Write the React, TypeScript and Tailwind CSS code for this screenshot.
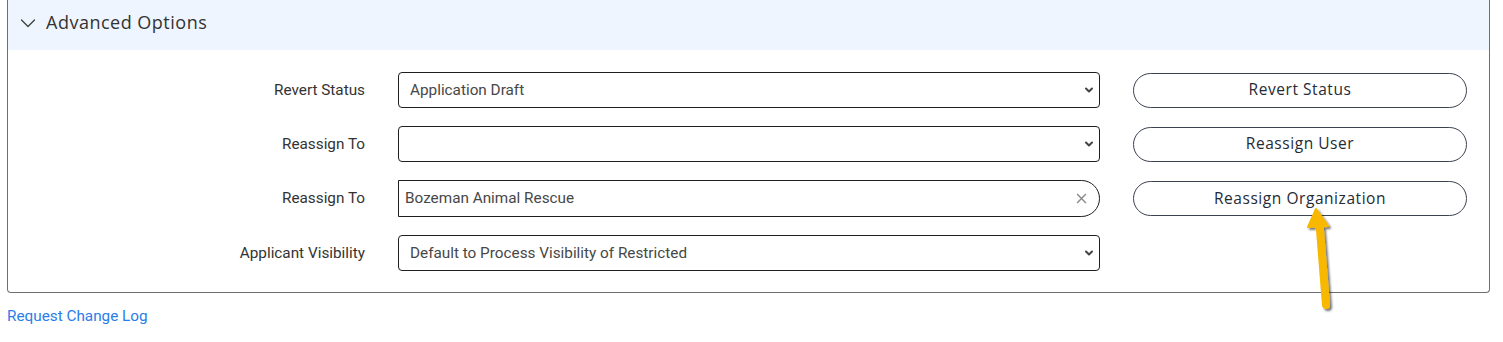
import React from 'react'

const labelFont = { fontFamily: 'Roboto, "Liberation Sans", sans-serif' }

const Chevron: React.FC = () => (
    <svg
        className="pointer-events-none absolute right-[6px] top-1/2 -translate-y-1/2 w-[10px] h-[10px] text-[#444]"
        viewBox="0 0 10 10"
        fill="none"
        stroke="currentColor"
        strokeWidth="2"
        strokeLinecap="round"
        strokeLinejoin="round"
    >
        <path d="M2 3.5l3 3 3-3" />
    </svg>
)

const SelectBox: React.FC<{ value: string }> = ({ value }) => (
    <div className="relative h-9">
        <div
            className="flex items-center h-full pl-[11px] pr-8 text-[15.3px] text-[#474747] bg-white border border-[#1f1f1f] rounded-[4px]"
            style={labelFont}
        >
            {value}
        </div>
        <Chevron />
    </div>
)

const PillButton: React.FC<{ children: React.ReactNode }> = ({ children }) => (
    <button
        type="button"
        className="w-full h-[35px] rounded-full border border-[#3b4250] bg-white text-[15.5px] text-[#252b36] font-['Open_Sans'] tracking-[0.55px]"
    >
        {children}
    </button>
)

const Row: React.FC<{ label: string; control: React.ReactNode; action?: string }> = ({
    label,
    control,
    action,
}) => (
    <div className="grid grid-cols-[357px_702px_334px] gap-x-[33px] items-center">
        <div className="text-right text-[15.3px] text-[#333]" style={labelFont}>
            {label}
        </div>
        <div>{control}</div>
        <div>{action && <PillButton>{action}</PillButton>}</div>
    </div>
)

const Arrow: React.FC = () => (
    <svg
        className="absolute left-[1295px] top-[200px] w-[45px] h-[120px] pointer-events-none"
        viewBox="1295 200 45 120"
    >
        <defs>
            <filter id="sh" x="-50%" y="-50%" width="200%" height="200%">
                <feDropShadow dx="2" dy="2" stdDeviation="1.2" floodColor="#000" floodOpacity="0.55" />
            </filter>
        </defs>
        <g filter="url(#sh)" fill="#f8b800" stroke="#f8b800">
            <line x1="1319.5" y1="224" x2="1326" y2="305" strokeWidth="8" strokeLinecap="round" />
            <polygon points="1316,209 1328,226 1308,227" strokeWidth="2" strokeLinejoin="round" />
        </g>
    </svg>
)

const App: React.FC = () => {
    return (
        <div className="relative w-[1503px] h-[342px] bg-white overflow-hidden">
            <div className="ml-[7px] w-[1483px] border border-t-0 border-[#6e6e6e] rounded-b-[4px]">
                <div className="flex items-center h-[50px] bg-[#eef5fe] pl-[12px] pb-[5px] gap-[10px]">
                    <svg
                        className="w-[16px] h-[16px] text-[#444]"
                        viewBox="0 0 16 16"
                        fill="none"
                        stroke="currentColor"
                        strokeWidth="1.4"
                        strokeLinecap="round"
                        strokeLinejoin="round"
                    >
                        <path d="M1.5 5l6.5 6.5L14.5 5" />
                    </svg>
                    <span className="text-[18px] text-[#333] font-['Open_Sans'] tracking-[0.5px]">
                        Advanced Options
                    </span>
                </div>
                <div className="flex flex-col gap-[18px] pt-[22px] pb-[21px]">
                    <Row
                        label="Revert Status"
                        control={<SelectBox value="Application Draft" />}
                        action="Revert Status"
                    />
                    <Row
                        label="Reassign To"
                        control={<SelectBox value="" />}
                        action="Reassign User"
                    />
                    <Row
                        label="Reassign To"
                        control={
                            <div className="flex items-center h-[37px] pl-[6px] pr-[12px] bg-white border border-[#1f1f1f] rounded-r-full">
                                <span className="flex-1 text-[15.3px] text-[#474747]" style={labelFont}>
                                    Bozeman Animal Rescue
                                </span>
                                <svg
                                    className="w-[11px] h-[11px] text-[#8a8a8a]"
                                    viewBox="0 0 10 10"
                                    fill="none"
                                    stroke="currentColor"
                                    strokeWidth="1.3"
                                >
                                    <path d="M1 1l8 8M9 1l-8 8" />
                                </svg>
                            </div>
                        }
                        action="Reassign Organization"
                    />
                    <Row
                        label="Applicant Visibility"
                        control={<SelectBox value="Default to Process Visibility of Restricted" />}
                    />
                </div>
            </div>
            <a
                href="#"
                className="block ml-[7px] mt-[12px] w-fit text-[15.3px] text-[#2b7de9]"
                style={labelFont}
            >
                Request Change Log
            </a>
            <Arrow />
        </div>
    )
}

export default App
